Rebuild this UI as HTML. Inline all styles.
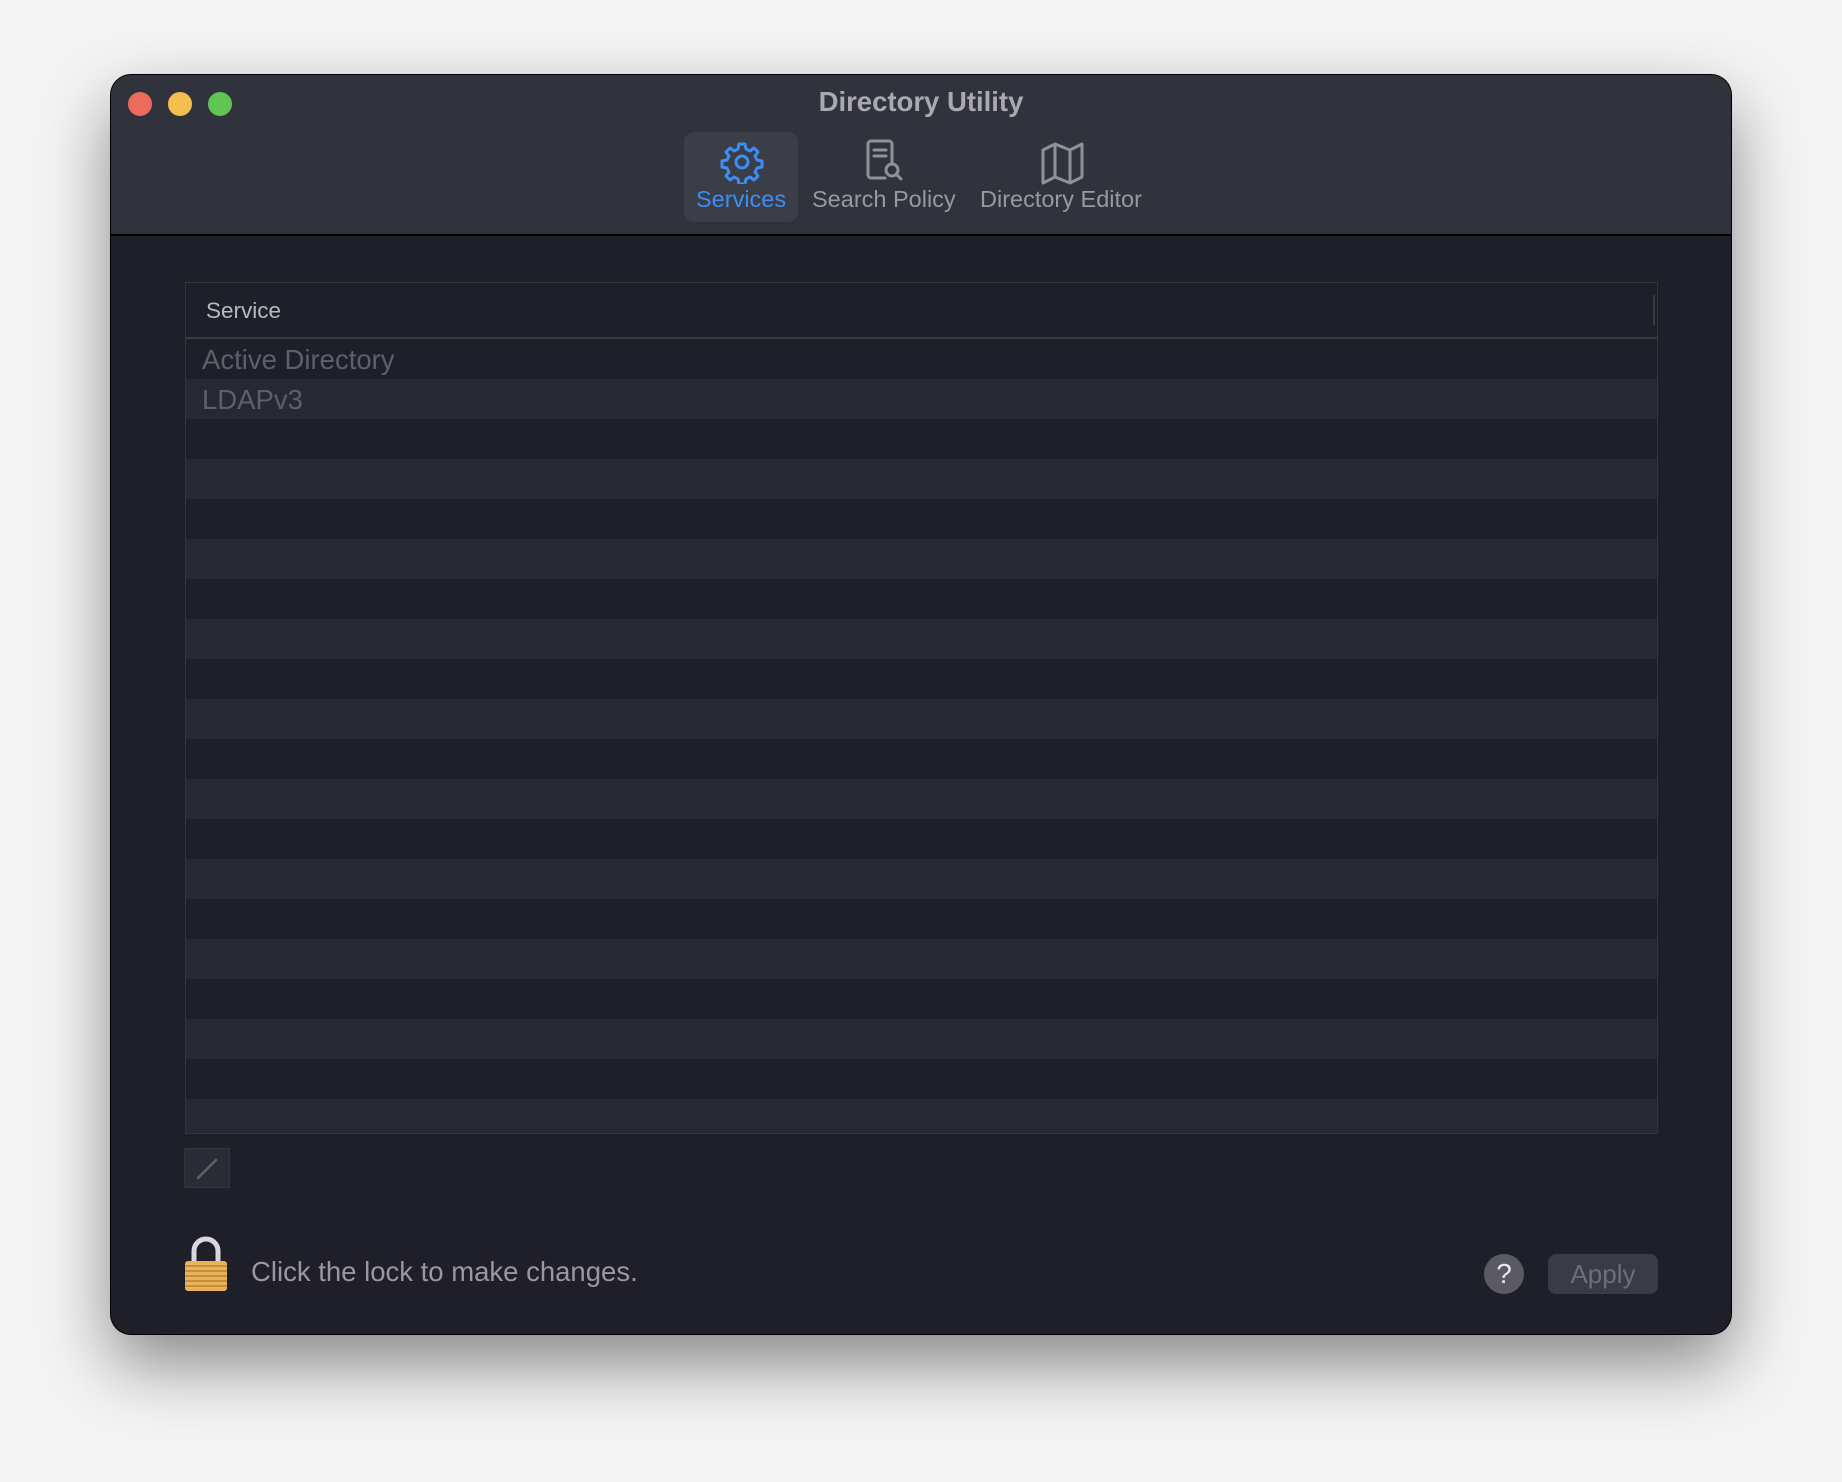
<!DOCTYPE html>
<html><head><meta charset="utf-8"><style>
*{margin:0;padding:0;box-sizing:border-box}
body{width:1842px;height:1482px;background:#f4f4f4;font-family:"Liberation Sans",sans-serif;position:relative;overflow:hidden}
.win{position:absolute;left:111px;top:75px;width:1620px;height:1259px;border-radius:20px;background:#1e1f29;overflow:hidden;box-shadow:0 30px 70px rgba(0,0,0,.45),0 0 0 1px #000;}
.tb{position:absolute;left:0;top:0;right:0;height:161px;background:#31333c;border-bottom:2px solid #000}
.dot{position:absolute;top:17px;width:24px;height:24px;border-radius:50%}
.title{position:absolute;left:0;right:0;top:11px;text-align:center;color:#a9a9ae;font-weight:bold;font-size:27.5px}
.sel{position:absolute;left:573px;top:57px;width:114px;height:90px;border-radius:10px;background:#3b3d47}
.lbl{position:absolute;top:111px;font-size:23.5px;color:#98989d}
.table{position:absolute;left:74px;top:207px;width:1473px;height:852px;border:1.5px solid #34353c;overflow:hidden}
.hdr{height:56px;border-bottom:2px solid #3a3b42;position:relative}
.hdr span{position:absolute;left:20px;top:15px;font-size:22.5px;color:#b8b9bf}
.row{height:40px;position:relative}
.row span{position:absolute;left:16px;top:5px;font-size:27.5px;color:#5e6069}
</style></head><body>
<div class="win">
<div class="tb">
<div class="dot" style="left:17px;background:#ed6a5e"></div>
<div class="dot" style="left:57px;background:#f4bf4f"></div>
<div class="dot" style="left:97px;background:#61c554"></div>
<div class="title">Directory Utility</div>
<div class="sel"></div>
<svg style="position:absolute;left:609px;top:65px" width="44" height="44" viewBox="0 0 44 44" fill="none" stroke="#3a8ef6" stroke-width="3" stroke-linejoin="round">
<path d="M19 4h6l1 5 4 2 4-3 4 4-3 4 2 4 5 1v6l-5 1-2 4 3 4-4 4-4-3-4 2-1 5h-6l-1-5-4-2-4 3-4-4 3-4-2-4-5-1v-6l5-1 2-4-3-4 4-4 4 3 4-2z"/><circle cx="22" cy="22" r="6"/></svg>
<div class="lbl" style="left:585px;color:#3a8ef6">Services</div>
<svg style="position:absolute;left:752px;top:64px" width="44" height="46" viewBox="0 0 44 46" fill="none" stroke="#909095" stroke-width="3" stroke-linecap="round">
<path d="M22 39H8a3 3 0 0 1-3-3V5a3 3 0 0 1 3-3h18a3 3 0 0 1 3 3v18"/><path d="M11 11h12M11 17h12"/><circle cx="29" cy="31" r="6"/><path d="M33 35l5 5"/></svg>
<div class="lbl" style="left:701px">Search Policy</div>
<svg style="position:absolute;left:929px;top:66px" width="46" height="44" viewBox="0 0 46 44" fill="none" stroke="#909095" stroke-width="3" stroke-linejoin="round">
<path d="M3 9l12-6 15 6 12-6v33l-12 6-15-6-12 6z"/><path d="M15 3v33M30 9v33"/></svg>
<div class="lbl" style="left:869px">Directory Editor</div>
</div>
<div class="table">
<div class="hdr"><span>Service</span><div style="position:absolute;right:2px;top:12px;width:2px;height:30px;background:#3a3b42"></div></div>
<div>
<div class="row" style="background:#1e1f29"><span>Active Directory</span></div>
<div class="row" style="background:#272833"><span>LDAPv3</span></div>
<div class="row" style="background:#1e1f29"></div><div class="row" style="background:#272833"></div>
<div class="row" style="background:#1e1f29"></div><div class="row" style="background:#272833"></div>
<div class="row" style="background:#1e1f29"></div><div class="row" style="background:#272833"></div>
<div class="row" style="background:#1e1f29"></div><div class="row" style="background:#272833"></div>
<div class="row" style="background:#1e1f29"></div><div class="row" style="background:#272833"></div>
<div class="row" style="background:#1e1f29"></div><div class="row" style="background:#272833"></div>
<div class="row" style="background:#1e1f29"></div><div class="row" style="background:#272833"></div>
<div class="row" style="background:#1e1f29"></div><div class="row" style="background:#272833"></div>
<div class="row" style="background:#1e1f29"></div><div class="row" style="background:#272833"></div>
</div></div>
<div style="position:absolute;left:73px;top:1073px;width:46px;height:40px;background:#2a2b35;border:1.5px solid #34353c"></div>
<svg style="position:absolute;left:73px;top:1073px" width="46" height="40"><path d="M14 30L32 12" stroke="#60616a" stroke-width="2.5" stroke-linecap="round"/></svg>
<svg style="position:absolute;left:73px;top:1160px" width="46" height="58" viewBox="0 0 46 58">
<path d="M10 28V16a12 12 0 0 1 24 0v12" fill="none" stroke="#d8d8dc" stroke-width="5"/>
<rect x="1" y="26" width="42" height="30" rx="3" fill="#e8b258"/>
<g stroke="#b98335" stroke-width="1.5"><path d="M1 31h42M1 36h42M1 41h42M1 46h42M1 51h42"/></g></svg>
<div style="position:absolute;left:140px;top:1181px;font-size:27.5px;color:#98989d">Click the lock to make changes.</div>
<div style="position:absolute;left:1373px;top:1179px;width:40px;height:40px;border-radius:50%;background:#5a5b62;color:#e8e8ea;font-size:28px;text-align:center;line-height:40px">?</div>
<div style="position:absolute;left:1437px;top:1179px;width:110px;height:40px;border-radius:8px;background:#393b46;color:#6d6e76;font-size:26px;text-align:center;line-height:40px">Apply</div>
</div>
</body></html>
